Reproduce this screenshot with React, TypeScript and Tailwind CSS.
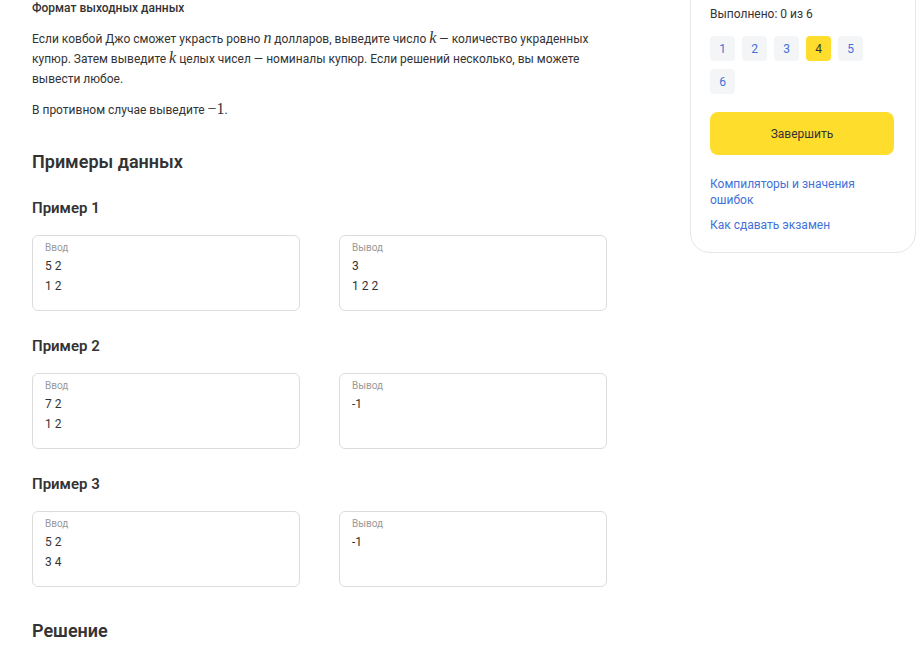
import React from 'react';

const examples = [
  { title: 'Пример 1', input: ['5 2', '1 2'], output: ['3', '1 2 2'] },
  { title: 'Пример 2', input: ['7 2', '1 2'], output: ['-1'] },
  { title: 'Пример 3', input: ['5 2', '3 4'], output: ['-1'] },
];

const M = ({ children }: { children: React.ReactNode }) => (
  <span className="font-['Liberation_Serif',serif] italic text-[16px] leading-[16px]">{children}</span>
);

function SampleBox({ label, lines }: { label: string; lines: string[] }) {
  return (
    <div className="h-[76px] rounded-[6px] border border-[#dcdcdc] px-[12px] pt-[6px]">
      <div className="text-[10px] leading-[12px] text-[#9a9a9a]">{label}</div>
      <div className="mt-[2px]">
        {lines.map((l, i) => (
          <div key={i} className="text-[12px] leading-[20px] text-[#333]">{l}</div>
        ))}
      </div>
    </div>
  );
}

export default function App() {
  const tasks = [1, 2, 3, 4, 5, 6];
  return (
    <div className="flex h-[650px] w-[919px] overflow-hidden bg-white font-['Roboto',sans-serif] text-[#333]">
      <main className="ml-[32px] w-[575px] shrink-0">
        <h3 className="text-[12px] font-medium leading-[16px] text-[#333]">Формат выходных данных</h3>
        <p className="mt-[13px] text-[12px] leading-[20px] text-[#333]">
          Если ковбой Джо сможет украсть ровно <M>n</M> долларов, выведите число <M>k</M> — количество украденных
          купюр. Затем выведите <M>k</M> целых чисел — номиналы купюр. Если решений несколько, вы можете
          вывести любое.
        </p>
        <p className="mt-[11px] text-[12px] leading-[20px] text-[#333]">
          В противном случае выведите <span className="font-['Liberation_Serif',serif] text-[16px] leading-[16px]">−1</span>.
        </p>

        <h2 className="mt-[30px] text-[18px] font-semibold leading-[24px]">Примеры данных</h2>

        {examples.map((ex, i) => (
          <section key={ex.title} className={i === 0 ? 'mt-[24px]' : 'mt-[25px]'}>
            <h4 className="text-[15px] font-semibold leading-[20px]">{ex.title}</h4>
            <div className="mt-[17px] grid grid-cols-2 gap-[39px]">
              <SampleBox label="Ввод" lines={ex.input} />
              <SampleBox label="Вывод" lines={ex.output} />
            </div>
          </section>
        ))}

        <h2 className="mt-[32px] text-[18px] font-semibold leading-[24px]">Решение</h2>
      </main>

      <aside className="ml-[83px] w-[226px] shrink-0">
        <div className="-mt-[20px] rounded-[20px] border border-[#e6e6e6] px-[19px] pt-[25px] pb-[19px]">
          <div className="text-[12px] leading-[16px] text-[#333]">Выполнено: 0 из 6</div>
          <div className="mt-[14px] flex w-[170px] flex-wrap gap-x-[7px] gap-y-[8px]">
            {tasks.map((t) => (
              <button
                key={t}
                className={
                  t === 4
                    ? 'flex h-[25px] w-[25px] items-center justify-center rounded-[4px] bg-[#ffdd2d] text-[12px] text-[#333]'
                    : 'flex h-[25px] w-[25px] items-center justify-center rounded-[4px] bg-[#f4f5f7] text-[12px] text-[#4272d7]'
                }
              >
                {t}
              </button>
            ))}
          </div>
          <button className="mt-[18px] h-[43px] w-[184px] rounded-[8px] bg-[#ffdd2d] text-[12px] text-[#333]">
            Завершить
          </button>
          <div className="mt-[21px] flex flex-col gap-[9px] text-[12px] leading-[16px] text-[#4272d7]">
            <a href="#" className="w-[160px]">Компиляторы и значения ошибок</a>
            <a href="#">Как сдавать экзамен</a>
          </div>
        </div>
      </aside>
    </div>
  );
}
